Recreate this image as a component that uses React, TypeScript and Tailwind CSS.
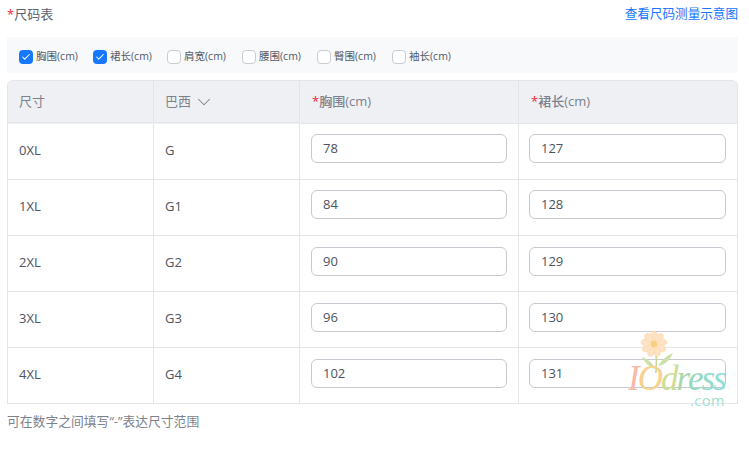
import { Check, ChevronDown } from 'lucide-react';

const options = [
  { label: '胸围(cm)', checked: true, width: 'w-[74px]' },
  { label: '裙长(cm)', checked: true, width: 'w-[74px]' },
  { label: '肩宽(cm)', checked: false, width: 'w-[75px]' },
  { label: '腰围(cm)', checked: false, width: 'w-[75px]' },
  { label: '臀围(cm)', checked: false, width: 'w-[75px]' },
  { label: '袖长(cm)', checked: false, width: 'w-[75px]' },
];

const rows = [
  ['0XL', 'G', '78', '127'],
  ['1XL', 'G1', '84', '128'],
  ['2XL', 'G2', '90', '129'],
  ['3XL', 'G3', '96', '130'],
  ['4XL', 'G4', '102', '131'],
];

function Required({ label }: { label: string }) {
  return (
    <span>
      <span className="text-[#f5222d]">*</span>
      {label}
    </span>
  );
}

function Watermark() {
  const petals = [0, 40, 80, 120, 160, 200, 240, 280, 320];
  return (
    <div className="absolute left-[627px] top-[330px] h-[80px] w-[100px] pointer-events-none">
      <svg width="100" height="44" viewBox="0 0 100 44" className="absolute left-0 top-0">
        <path d="M29 43 C29 36 30 31 29 25" stroke="#c5d99a" strokeWidth="1.6" fill="none" />
        <path d="M29 39 C25 33 21 29 15 27 C18 33 23 38 29 39 Z" fill="#cfe0a6" />
        <path d="M31 36 C35 30 40 25 46 23 C43 30 38 35 31 36 Z" fill="#cfe0a6" />
        {petals.map((angle) => (
          <ellipse
            key={angle}
            cx="27"
            cy="6"
            rx="3.4"
            ry="5"
            fill="#fde3c4"
            stroke="#fbd9ae"
            strokeWidth="0.7"
            transform={`rotate(${angle} 27 14)`}
          />
        ))}
        <circle cx="27" cy="14" r="3.2" fill="#f8cf80" />
      </svg>
      <div className="absolute left-[1px] top-[33px] flex h-[32px] items-baseline font-['Liberation_Serif',serif] text-[35px] italic leading-[32px] tracking-[-2px]">
        <span className="text-[#f9b9a8]">I</span>
        <span className="text-[#f9d08c]">O</span>
        <span className="text-[#cbdd95]">d</span>
        <span className="text-[#a8d7ae]">r</span>
        <span className="text-[#95dabc]">e</span>
        <span className="text-[#90dcc8]">s</span>
        <span className="text-[#90dcd6]">s</span>
      </div>
      <div className="absolute left-[63px] top-[63px] font-['Open_Sans',sans-serif] text-[14.5px] leading-[15px] tracking-[0.5px] text-[#a3e0d2]">
        .com
      </div>
    </div>
  );
}

export default function App() {
  return (
    <div className="relative h-[450px] w-[749px] overflow-hidden bg-white font-['Open_Sans','Noto_Sans_CJK_SC',sans-serif] text-[13px] text-[#5b6270]">
      {/* Title row */}
      <div className="flex h-[37px] items-start justify-between pl-[7px] pr-[11px] pt-[6px] leading-[17px]">
        <Required label="尺码表" />
        <a className="text-[12.6px] leading-[15px] text-[#1677ff]">查看尺码测量示意图</a>
      </div>

      {/* Column picker */}
      <div className="ml-[7px] flex h-[36px] w-[731px] items-center bg-[#f8f9fb] pl-[12px] pt-[4px] text-[10.5px] text-[#555b66]">
        {options.map((option) => (
          <label key={option.label} className={`flex items-center gap-[3px] ${option.width}`}>
            {option.checked ? (
              <span className="flex h-[14px] w-[14px] items-center justify-center rounded-[4px] bg-[#1677ff]">
                <Check className="h-[10px] w-[10px] text-white" strokeWidth={2.5} />
              </span>
            ) : (
              <span className="h-[14px] w-[14px] rounded-[4px] border border-[#c9ccd3] bg-white" />
            )}
            {option.label}
          </label>
        ))}
      </div>

      {/* Size table */}
      <div className="ml-[7px] mt-[7px] w-[731px] overflow-hidden rounded-t-[6px] border-x border-t border-[#e3e5ea]">
        <div className="flex h-[43px] bg-[#eff0f3] text-[#7c828d]">
          <div className="flex h-[42px] w-[146px] items-center border-b border-r border-[#e3e5ea] pl-[11px]">尺寸</div>
          <div className="flex h-[42px] w-[146px] items-center gap-[2px] border-b border-r border-[#e3e5ea] pl-[11px]">
            巴西
            <ChevronDown className="h-[22px] w-[22px] text-[#7c828d]" strokeWidth={1.1} />
          </div>
          <div className="flex w-[219px] items-center border-b border-r border-[#e3e5ea] pl-[12px] font-medium">
            <Required label="胸围(cm)" />
          </div>
          <div className="flex flex-1 items-center border-b border-[#e3e5ea] pl-[12px] font-medium">
            <Required label="裙长(cm)" />
          </div>
        </div>
        {rows.map(([size, brazil, chest, length], i) => (
          <div key={size} className="flex h-[56px] border-b border-[#e3e5ea] text-[#4d5360]">
            <div className="flex w-[146px] items-center border-r border-[#e3e5ea] pb-[2px] pl-[11px]">{size}</div>
            <div className="flex w-[146px] items-center border-r border-[#e3e5ea] pb-[2px] pl-[11px]">{brazil}</div>
            <div className={`flex w-[219px] items-center border-r border-[#e3e5ea] pl-[11px] ${i < 2 ? 'pb-[6px]' : 'pb-[4px]'}`}>
              <div className="flex h-[29px] w-[196px] items-center rounded-[6px] border border-[#c6c9d0] bg-white pl-[11px] pt-[1px]">{chest}</div>
            </div>
            <div className={`flex flex-1 items-center pl-[10px] ${i < 2 ? 'pb-[6px]' : 'pb-[4px]'}`}>
              <div className="flex h-[29px] w-[197px] items-center rounded-[6px] border border-[#c6c9d0] bg-white pl-[11px] pt-[1px]">{length}</div>
            </div>
          </div>
        ))}
      </div>

      <p className="ml-[7px] mt-[9px] text-[12.8px] leading-[17px] text-[#7c828d]">可在数字之间填写“-”表达尺寸范围</p>

      <Watermark />
    </div>
  );
}
